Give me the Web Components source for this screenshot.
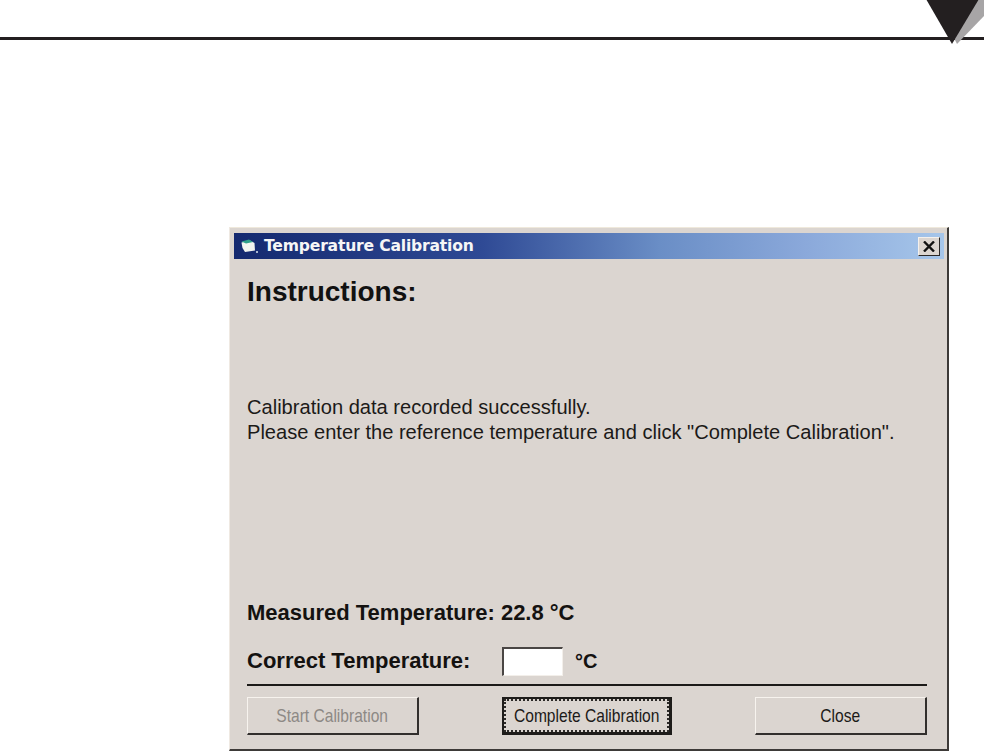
<!DOCTYPE html>
<html>
<head>
<meta charset="utf-8">
<title>Temperature Calibration</title>
<style>
  html, body { margin: 0; background: #fff; }
  body { width: 984px; height: 753px; overflow: hidden; font-family: "Liberation Sans", Arial, sans-serif; color: #141210; }
</style>
</head>
<body>
<page-head></page-head>
<cal-window caption="Temperature Calibration">
  <cal-heading>Instructions:</cal-heading>
  <cal-message>
    Calibration data recorded successfully.<br>
    Please enter the reference temperature and click "Complete Calibration".
  </cal-message>
  <cal-measured>Measured Temperature: 22.8 °C</cal-measured>
  <cal-correct>Correct Temperature:</cal-correct>
  <cal-actions>
    <win-button disabled style="width:172px">Start Calibration</win-button>
    <win-button default style="width:170px">Complete Calibration</win-button>
    <win-button style="width:172px">Close</win-button>
  </cal-actions>
</cal-window>

<script>
function simple(name, css, html) {
  customElements.define(name, class extends HTMLElement {
    constructor() {
      super();
      this.attachShadow({ mode: 'open' });
      this.shadowRoot.innerHTML = `<style>${css}</style>${html}`;
    }
  });
}

simple('page-head', `
  :host { display: block; height: 227px; box-sizing: border-box; padding-top: 37px; position: relative; }
  .rule { height: 3px; background: #231f20; }
  svg { position: absolute; left: 920px; top: 0; }
`, `
  <div class="rule"></div>
  <svg width="64" height="46" viewBox="0 0 64 46">
    <polygon points="37,44 64,16 64,0 50,0 30,30" fill="#a7a5a6"/>
    <polygon points="6,-1 59,-1 32,44" fill="#231f20"/>
  </svg>
`);

customElements.define('cal-window', class extends HTMLElement {
  constructor() {
    super();
    this.attachShadow({ mode: 'open' });
    this.shadowRoot.innerHTML = `
      <style>
        :host {
          display: block; width: 720px; height: 524px; margin-left: 229px; box-sizing: border-box;
          background: #dbd5d0; padding: 5px 3px 3px 4px;
          border-top: 1px solid #efe9dc; border-left: 1px solid #efe9e2;
          border-right: 2px solid #3d3a38; border-bottom: 2px solid #3d3a38;
        }
        .title {
          height: 26px; display: flex; align-items: center; gap: 6px; padding: 0 4px 0 7px;
          background: linear-gradient(90deg, #14296f 0%, #2f4a95 35%, #6a8ec6 60%, #8aa8da 80%, #a6c6ea 100%);
          color: #f6f6f6; font: bold 15.6px "DejaVu Sans", Verdana, sans-serif; letter-spacing: -0.2px;
        }
        .title span { flex: 1; }
        .x {
          width: 22px; height: 19px; box-sizing: border-box; background: #dbd5d0;
          border: 1px solid; border-color: #f4f0ec #2a2826 #2a2826 #f4f0ec;
          display: flex; align-items: center; justify-content: center;
        }
        .body { padding: 0 17px 0 13px; display: flex; flex-direction: column; }
      </style>
      <div class="title">
        <svg width="17" height="15" viewBox="0 0 17 15">
          <polygon points="0.5,3.5 9,1.5 13.5,4 14,11.5 4,13 1.5,9" fill="#f2f4ef"/>
          <polygon points="0.5,2.5 8,0.5 12,3 5,4.5" fill="#2fa08a"/>
          <rect x="15" y="12" width="2" height="2" fill="#a9b7d0"/>
        </svg>
        <span id="cap"></span>
        <div class="x">
          <svg width="12" height="11" viewBox="0 0 12 11"><path d="M1 0.5 L11 10.5 M11 0.5 L1 10.5" stroke="#111" stroke-width="2.4" fill="none"/></svg>
        </div>
      </div>
      <div class="body"><slot></slot></div>
    `;
    this.shadowRoot.getElementById('cap').textContent = this.getAttribute('caption');
  }
});

simple('cal-heading', `
  :host { display: block; margin-top: 18px; height: 30px; font: bold 28px/30px "Liberation Sans", sans-serif; color: #111; }
`, `<slot></slot>`);

simple('cal-message', `
  :host { display: block; margin-top: 88px; height: 205px; font: 20.1px/25px "Liberation Sans", sans-serif; color: #1c1a18; }
`, `<slot></slot>`);

simple('cal-measured', `
  :host { display: block; height: 26px; font: bold 22px/26px "Liberation Sans", sans-serif; color: #141210; }
`, `<slot></slot>`);

simple('cal-correct', `
  :host { display: flex; align-items: center; height: 30px; margin-top: 20px; font: bold 22px/26px "Liberation Sans", sans-serif; color: #141210; }
  .label { width: 255px; }
  .field { width: 61px; height: 29px; box-sizing: border-box; background: #fff; border: 1px solid; border-color: #4a4644 #f3efea #f3efea #4a4644; border-top-width: 2px; border-left-width: 2px; }
  .unit { margin-left: 12px; font-size: 20px; }
`, `<span class="label"><slot></slot></span><div class="field"></div><span class="unit">°C</span>`);

simple('cal-actions', `
  :host { display: flex; justify-content: space-between; align-items: flex-start; margin-top: 8px; padding-top: 11px; border-top: 2px solid #1c1a18; }
`, `<slot></slot>`);

customElements.define('win-button', class extends HTMLElement {
  constructor() {
    super();
    this.attachShadow({ mode: 'open' });
    this.shadowRoot.innerHTML = `
      <style>
        :host {
          display: block; height: 38px; box-sizing: border-box; background: #dbd5d0;
          border: 1px solid; border-color: #f7f3ee #322f2d #322f2d #f7f3ee;
          border-right-width: 2px; border-bottom-width: 2px;
          font: 19px "Liberation Sans", sans-serif; color: #1c1a18; padding: 2px;
        }
        :host([default]) { border: 3px solid #1e1c1a; padding: 0; border-top-width: 2px; border-left-width: 2px; }
        :host([disabled]) { color: #8d8985; }
        .inner { height: 100%; box-sizing: border-box; display: flex; align-items: center; justify-content: center; }
        .inner span { display: inline-block; white-space: nowrap; transform: scaleX(0.82); }
        :host([default]) .inner { border: 2px dotted #2c2a28; }
      </style>
      <div class="inner"><span><slot></slot></span></div>
    `;
  }
});
</script>
</body>
</html>
